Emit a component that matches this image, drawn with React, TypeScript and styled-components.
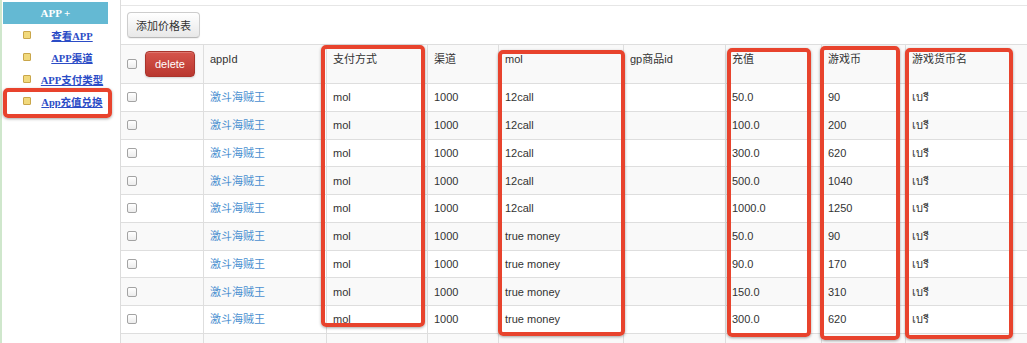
import React from "react";
import styled, { createGlobalStyle, css } from "styled-components";

const GlobalStyle = createGlobalStyle`
  html, body { margin: 0; padding: 0; background: #fff; overflow: hidden; }
  body { font-family: "Liberation Sans", Arial, "Noto Sans CJK SC", sans-serif; color: #333; }
  * { box-sizing: border-box; }
`;

const Page = styled.div`
  position: relative;
  display: flex;
  width: 1027px;
  height: 343px;
  overflow: hidden;
`;

const Sidebar = styled.div`
  width: 120px;
  flex: none;
  border-left: 2px solid #cfe7cc;
  padding: 2px 0 0 1px;
`;

const SideHeader = styled.div`
  width: 105px;
  height: 22px;
  background: #64b9d3;
  color: #fff;
  font-family: "Liberation Serif", "Times New Roman", "Noto Sans CJK SC", serif;
  font-weight: bold;
  font-size: 11px;
  display: flex;
  align-items: center;
  justify-content: center;
`;

const SideItem = styled.div`
  width: 105px;
  height: 22px;
  display: flex;
  align-items: center;
  padding-left: 20px;
`;

const SideIcon = styled.span`
  width: 8px;
  height: 8px;
  flex: none;
  background: #f1d97c;
  border: 1px solid #c9a64a;
  border-radius: 1px;
`;

const SideLink = styled.a`
  flex: 1;
  text-align: center;
  padding-left: 5px;
  font-family: "Liberation Serif", "Times New Roman", "Noto Sans CJK SC", serif;
  font-weight: bold;
  font-size: 10.5px;
  color: #2b4cc6;
  text-decoration: underline;
  white-space: nowrap;
`;

const Main = styled.div`
  flex: 1;
  min-width: 0;
  border-left: 1px solid #dcdcdc;
  overflow: hidden;
`;

const TopStrip = styled.div`
  height: 6px;
  border-bottom: 1px solid #e6e6e6;
`;

const Toolbar = styled.div`
  display: flex;
  padding: 6px 0 6px 6px;
`;

const GreyButton = styled.button`
  height: 26px;
  padding: 0 8px;
  border: 1px solid #cdcdcd;
  border-bottom-color: #b8b8b8;
  border-radius: 4px;
  background: linear-gradient(#ffffff, #e8e8e8);
  box-shadow: inset 0 1px 0 rgba(255,255,255,.3), 0 1px 1px rgba(0,0,0,.06);
  font-family: "Liberation Sans", Arial, "Noto Sans CJK SC", sans-serif;
  font-size: 11px;
  color: #333;
`;

const Grid = styled.div`
  display: grid;
  grid-template-columns: 82px 123px 101px 71px 125px 102px 96px 84px 140px;
  grid-auto-rows: 27.75px;
  grid-template-rows: 39px;
  font-size: 11px;
  width: 924px;
`;

const Cell = styled.div<{ $striped?: boolean; $header?: boolean; $first?: boolean }>`
  display: flex;
  align-items: center;
  padding: 0 6px;
  border-top: 1px solid #dedede;
  border-left: ${(p) => (p.$first ? "none" : "1px solid #dedede")};
  background: ${(p) => (p.$striped ? "#f9f9f9" : "#fff")};
  white-space: nowrap;
  line-height: 18px;
  ${(p) =>
    p.$header &&
    !p.$first &&
    css`
      align-items: flex-start;
      padding-top: 5px;
    `}
  ${(p) =>
    p.$first &&
    css`
      gap: 8px;
    `}
`;

const CheckBox = styled.span`
  width: 10px;
  height: 10px;
  flex: none;
  border: 1px solid #a3a3a3;
  border-radius: 2px;
  background: linear-gradient(#ffffff, #ececec);
`;

const DangerButton = styled.button`
  width: 50px;
  height: 26px;
  padding: 0;
  border: 1px solid #a9342c;
  border-radius: 4px;
  background: linear-gradient(#d6554c, #b9372f);
  box-shadow: inset 0 1px 0 rgba(255,255,255,.2), 0 1px 2px rgba(0,0,0,.15);
  color: #fff;
  font-family: "Liberation Sans", Arial, sans-serif;
  font-size: 11px;
`;

const AppLink = styled.a`
  color: #4a8fd0;
  text-decoration: none;
`;

const Annotation = styled.div<{ $x: number; $y: number; $w: number; $h: number }>`
  position: absolute;
  left: ${(p) => p.$x}px;
  top: ${(p) => p.$y}px;
  width: ${(p) => p.$w}px;
  height: ${(p) => p.$h}px;
  border: 4px solid #e8432d;
  border-radius: 5px;
  box-shadow: 0 1px 3px rgba(0, 0, 0, 0.35);
  pointer-events: none;
`;

const sideItems = ["查看APP", "APP渠道", "APP支付类型", "App充值兑换"];

const headers = ["appId", "支付方式", "渠道", "mol", "gp商品id", "充值", "游戏币", "游戏货币名"];

const rows: [string, string, string][] = [
  ["12call", "50.0", "90"],
  ["12call", "100.0", "200"],
  ["12call", "300.0", "620"],
  ["12call", "500.0", "1040"],
  ["12call", "1000.0", "1250"],
  ["true money", "50.0", "90"],
  ["true money", "90.0", "170"],
  ["true money", "150.0", "310"],
  ["true money", "300.0", "620"],
];

const annotations = [
  { x: 3, y: 88, w: 109, h: 30 },
  { x: 321, y: 45, w: 104, h: 282 },
  { x: 498, y: 50, w: 127, h: 286 },
  { x: 727, y: 48, w: 84, h: 289 },
  { x: 820, y: 46, w: 80, h: 294 },
  { x: 905, y: 48, w: 108, h: 291 },
];

export default function App() {
  return (
    <>
      <GlobalStyle />
      <Page>
        <Sidebar>
          <SideHeader>APP +</SideHeader>
          {sideItems.map((t) => (
            <SideItem key={t}>
              <SideIcon />
              <SideLink href="#">{t}</SideLink>
            </SideItem>
          ))}
        </Sidebar>
        <Main>
          <TopStrip />
          <Toolbar>
            <GreyButton>添加价格表</GreyButton>
          </Toolbar>
          <Grid>
            <Cell $header $first $striped>
              <CheckBox />
              <DangerButton>delete</DangerButton>
            </Cell>
            {headers.map((h) => (
              <Cell $header $striped key={h}>
                {h}
              </Cell>
            ))}
            {rows.map((r, i) => {
              const s = i % 2 === 1;
              return (
                <React.Fragment key={i}>
                  <Cell $first $striped={s}>
                    <CheckBox />
                  </Cell>
                  <Cell $striped={s}>
                    <AppLink href="#">激斗海贼王</AppLink>
                  </Cell>
                  <Cell $striped={s}>mol</Cell>
                  <Cell $striped={s}>1000</Cell>
                  <Cell $striped={s}>{r[0]}</Cell>
                  <Cell $striped={s}></Cell>
                  <Cell $striped={s}>{r[1]}</Cell>
                  <Cell $striped={s}>{r[2]}</Cell>
                  <Cell $striped={s}>เบรี</Cell>
                </React.Fragment>
              );
            })}
            {Array.from({ length: 9 }).map((_, j) => (
              <Cell key={"e" + j} $first={j === 0} $striped />
            ))}
          </Grid>
        </Main>
        {annotations.map((a, i) => (
          <Annotation key={i} $x={a.x} $y={a.y} $w={a.w} $h={a.h} />
        ))}
      </Page>
    </>
  );
}
